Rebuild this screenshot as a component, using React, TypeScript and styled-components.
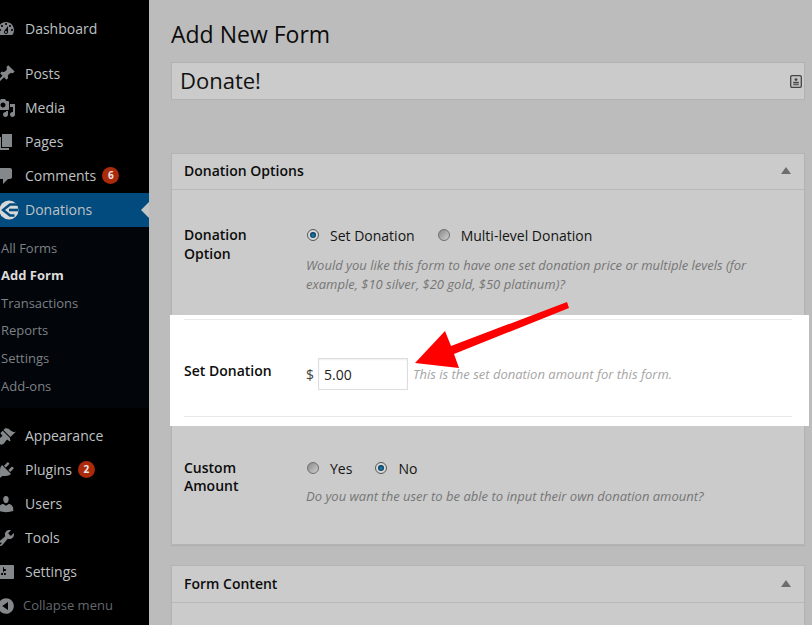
import styled, { createGlobalStyle } from "styled-components";

const GlobalStyle = createGlobalStyle`
  html, body {
    margin: 0;
    padding: 0;
    height: 100%;
    overflow: hidden;
    background: #bcbcbc;
    font-family: "Open Sans", "Noto Sans", sans-serif;
  }
`;

const Page = styled.div`
  position: relative;
  display: flex;
  width: 812px;
  height: 625px;
  overflow: hidden;
  background: #bcbcbc;
`;

const Sidebar = styled.nav`
  flex: 0 0 149px;
  display: flex;
  flex-direction: column;
  background: #000;
  padding-top: 12px;
  box-sizing: border-box;
`;

const MenuGroup = styled.div<{ $gap?: number }>`
  display: flex;
  flex-direction: column;
  margin-top: ${(p) => p.$gap ?? 0}px;
`;

const MenuItem = styled.div<{ $active?: boolean }>`
  position: relative;
  display: flex;
  align-items: center;
  height: 34px;
  box-sizing: border-box;
  padding: 0 0 2px 25px;
  font-size: 14px;
  color: #bfc1c3;
  background: ${(p) => (p.$active ? "#024b7e" : "transparent")};

  ${(p) =>
    p.$active &&
    `&::after {
      content: "";
      position: absolute;
      right: 0;
      top: 50%;
      margin-top: -8px;
      border: 8px solid transparent;
      border-right-color: #c4c4c4;
      border-left-width: 0;
    }`}
`;

const MenuIcon = styled.svg`
  position: absolute;
  left: -4px;
  top: 7px;
  width: 20px;
  height: 20px;
  fill: #85888b;
`;

const LogoIcon = styled.svg`
  position: absolute;
  left: -2px;
  top: 6px;
  width: 22px;
  height: 22px;
`;

const Badge = styled.span`
  display: inline-flex;
  align-items: center;
  justify-content: center;
  width: 17px;
  height: 17px;
  margin-left: 6px;
  border-radius: 50%;
  background: #ab2a0c;
  color: #e8e8e8;
  font-size: 10px;
  font-weight: 700;
`;

const SubMenu = styled.div`
  display: flex;
  flex-direction: column;
  height: 181px;
  padding-top: 7.7px;
  box-sizing: border-box;
  background: #02050a;
`;

const SubItem = styled.div<{ $current?: boolean }>`
  height: 27.6px;
  line-height: 27.6px;
  padding-left: 1px;
  font-size: 13px;
  font-weight: ${(p) => (p.$current ? 700 : 400)};
  color: ${(p) => (p.$current ? "#dcdcdc" : "#7d8186")};
`;

const Collapse = styled(MenuItem)`
  padding-left: 23px;
  font-size: 13px;
  color: #63686d;
`;

const Main = styled.main`
  flex: 1;
  display: flex;
  flex-direction: column;
  padding: 0 7px 0 22px;
  min-width: 0;
`;

const Title = styled.h1`
  flex-shrink: 0;
  margin: 18px 0 11px;
  height: 33px;
  line-height: 33px;
  font-size: 23px;
  font-weight: 400;
  color: #0c0c0c;
`;

const TitleBox = styled.div`
  flex-shrink: 0;
  display: flex;
  align-items: center;
  justify-content: space-between;
  height: 36px;
  padding: 0 2px 0 8px;
  border: 1px solid #b2b2b2;
  background: #cbcbcb;
  font-size: 22px;
  color: #111;
`;

const TitleText = styled.span`
  margin-bottom: 2px;
`;

const ContactIcon = styled.svg`
  width: 12px;
  height: 13px;
`;

const Card = styled.section<{ $top: number }>`
  flex-shrink: 0;
  margin-top: ${(p) => p.$top}px;
  border: 1px solid #b4b4b4;
  background: #cbcbcb;
  box-shadow: 0 1px 1px rgba(0, 0, 0, 0.06);
`;

const CardHeader = styled.header<{ $tall?: boolean }>`
  display: flex;
  align-items: center;
  justify-content: space-between;
  height: ${(p) => (p.$tall ? 34 : 33)}px;
  padding: 0 13px ${(p) => (p.$tall ? 2 : 2)}px 12px;
  border-bottom: 1px solid #b9b9b9;
  font-size: 14px;
  font-weight: 600;
  color: #0c0c0c;
`;

const CardBody = styled.div`
  height: 60px;
`;

const CollapseArrow = styled.span`
  width: 0;
  height: 0;
  border-left: 5px solid transparent;
  border-right: 5px solid transparent;
  border-bottom: 7px solid #6d6d6d;
`;

const Row = styled.div<{ $height: number; $top: number }>`
  display: grid;
  grid-template-columns: 122px 1fr;
  height: ${(p) => p.$height}px;
  padding: ${(p) => p.$top}px 12px 0;
  box-sizing: border-box;
`;

const RowLabel = styled.div<{ $leading?: number; $top?: number }>`
  margin-top: ${(p) => p.$top ?? 0}px;
  font-size: 14px;
  font-weight: 600;
  line-height: ${(p) => p.$leading ?? 19}px;
  color: #0c0c0c;
`;

const RadioLine = styled.div`
  display: flex;
  align-items: center;
  height: 20px;
  font-size: 14px;
  color: #141414;
`;

const RadioOption = styled.label<{ $gap: number }>`
  display: flex;
  align-items: center;
  gap: 11px;
  margin-left: 1px;
  margin-right: ${(p) => p.$gap}px;
`;

const Radio = styled.span<{ $checked?: boolean }>`
  display: flex;
  align-items: center;
  justify-content: center;
  width: 12px;
  height: 12px;
  border-radius: 50%;
  border: 1px solid ${(p) => (p.$checked ? "#555" : "#6f6f6f")};
  box-sizing: border-box;
  background: ${(p) => (p.$checked ? "#d8d8d8" : "linear-gradient(135deg, #8a8a8a, #cfcfcf)")};

  &::after {
    content: "";
    display: ${(p) => (p.$checked ? "block" : "none")};
    width: 6px;
    height: 6px;
    border-radius: 50%;
    background: radial-gradient(circle at 50% 55%, #1c86b8, #08304f 75%);
  }
`;

const Hint = styled.p<{ $top: number }>`
  margin: ${(p) => p.$top}px 0 0;
  font-size: 13px;
  font-style: italic;
  line-height: 19px;
  color: #767676;
`;

const Band = styled.div`
  position: relative;
  margin: 0 -5px 0 -2px;
  padding: 4px 17px 9px 14px;
  background: #fff;
`;

const BandRow = styled.div`
  display: grid;
  grid-template-columns: 122px 1fr;
  align-items: center;
  height: 98px;
  padding-top: 4px;
  box-sizing: border-box;
  border-top: 1px solid #e9e9e9;
  border-bottom: 1px solid #e9e9e9;
`;

const AmountField = styled.div`
  display: flex;
  align-items: center;
  margin-top: 8px;
  font-size: 14px;
  color: #444;
`;

const AmountInput = styled.input`
  width: 90px;
  height: 32px;
  box-sizing: border-box;
  margin: 0 5px 0 4px;
  padding: 0 5px;
  border: 1px solid #ddd;
  box-shadow: inset 0 1px 2px rgba(0, 0, 0, 0.07);
  font-family: inherit;
  font-size: 14px;
  color: #222;
  outline: none;
`;

const InlineHint = styled.span`
  font-size: 13px;
  font-style: italic;
  color: #a5a5a5;
`;

const Arrow = styled.svg`
  position: absolute;
  left: 405px;
  top: 295px;
  width: 175px;
  height: 80px;
  fill: #fe0000;
`;

const icons = {
  dashboard:
    "M3.76 16h12.48c1.1-1.37 1.76-3.11 1.76-5 0-4.42-3.58-8-8-8s-8 3.58-8 8c0 1.89.66 3.63 1.76 5zM10 4c.55 0 1 .45 1 1s-.45 1-1 1-1-.45-1-1 .45-1 1-1zM6 6c.55 0 1 .45 1 1s-.45 1-1 1-1-.45-1-1 .45-1 1-1zm8 0c.55 0 1 .45 1 1s-.45 1-1 1-1-.45-1-1 .45-1 1-1zm-5.37 5.55L12 7v6c0 1.1-.9 2-2 2s-2-.9-2-2c0-.57.24-1.08.63-1.45zM4 10c.55 0 1 .45 1 1s-.45 1-1 1-1-.45-1-1 .45-1 1-1zm12 0c.55 0 1 .45 1 1s-.45 1-1 1-1-.45-1-1 .45-1 1-1zm-5 3c0-.55-.45-1-1-1s-1 .45-1 1 .45 1 1 1 1-.45 1-1z",
  posts:
    "M10.44 3.02l1.82-1.82 6.36 6.35-1.83 1.82c-1.05-.68-2.48-.57-3.41.36l-.75.75c-.92.93-1.04 2.35-.35 3.41l-1.83 1.82-2.41-2.41-2.8 2.79c-.42.42-3.38 2.71-3.8 2.29s1.86-3.39 2.28-3.81l2.79-2.79L4.1 9.36l1.83-1.82c1.05.69 2.48.57 3.4-.36l.75-.75c.93-.92 1.05-2.35.36-3.41z",
  media:
    "M13 11V4c0-.55-.45-1-1-1h-1.67L9 1H5L3.67 3H2c-.55 0-1 .45-1 1v7c0 .55.45 1 1 1h10c.55 0 1-.45 1-1zM7 4.5c1.38 0 2.5 1.12 2.5 2.5S8.38 9.5 7 9.5 4.5 8.38 4.5 7 5.62 4.5 7 4.5zM14 6h5v10.5c0 1.38-1.12 2.5-2.5 2.5S14 17.88 14 16.5s1.12-2.5 2.5-2.5c.17 0 .34.02.5.05V9h-3V6zm-4 8.05V13h2v3.5c0 1.38-1.12 2.5-2.5 2.5S7 17.88 7 16.5 8.12 14 9.5 14c.17 0 .34.02.5.05z",
  pages: "M6 15V2h10v13H6zm-1 1h8v2H3V5h2v11z",
  comments:
    "M5 2h9c1.1 0 2 .9 2 2v7c0 1.1-.9 2-2 2h-2l-5 5v-5H5c-1.1 0-2-.9-2-2V4c0-1.1.9-2 2-2z",
  appearance:
    "M14.48 11.06L7.41 3.99l1.5-1.5c.5-.56 2.3-.47 3.51.32 1.21.8 1.43 1.28 2.91 2.1 1.18.64 2.45 1.26 4.45.85zm-.71.71L6.7 4.7 4.93 6.47c-.39.39-.39 1.02 0 1.41l1.06 1.06c.39.39.39 1.03 0 1.42-.6.6-1.43 1.11-2.21 1.69-.35.26-.7.53-1.01.84C1.43 13.23.4 15.07 2.65 17.32c2.26 2.26 4.09 1.22 5.43-.12.31-.31.58-.66.84-1.01.58-.78 1.09-1.61 1.69-2.21.39-.39 1.02-.39 1.41 0l1.06 1.06c.39.39 1.02.39 1.41 0z",
  plugins:
    "M13.11 4.36L9.87 7.6 8 5.73l3.24-3.24c.35-.34 1.05-.2 1.56.32.52.51.66 1.21.31 1.55zm-8 1.77l.91-1.12 9.01 9.01-1.19.84c-.71.71-2.63 1.16-3.82 1.16H6.14L4.9 17.26c-.59.59-1.54.59-2.12 0-.59-.58-.59-1.53 0-2.12l1.24-1.24v-3.88c0-1.13.4-3.19 1.09-3.89zm7.26 3.97l3.24-3.24c.34-.35 1.04-.21 1.55.31.52.51.66 1.21.31 1.55l-3.24 3.25z",
  users:
    "M10 9.25c-2.27 0-2.73-3.44-2.73-3.44C7 4.02 7.82 2 9.97 2c2.16 0 2.98 2.02 2.71 3.81 0 0-.41 3.44-2.68 3.44zm0 2.57L12.72 10c2.39 0 4.52 2.33 4.52 4.53v2.49s-3.65 1.13-7.24 1.13c-3.65 0-7.24-1.13-7.24-1.13v-2.49c0-2.25 1.94-4.48 4.47-4.48z",
  tools:
    "M16.68 9.77c-1.34 1.34-3.3 1.67-4.95.99l-5.41 6.52c-.99.99-2.59.99-3.58 0s-.99-2.59 0-3.57l6.52-5.42c-.68-1.65-.35-3.61.99-4.95 1.28-1.28 3.12-1.62 4.72-1.06l-2.89 2.89 2.82 2.82 2.86-2.87c.53 1.58.18 3.39-1.08 4.65zM3.81 16.21c.4.39 1.04.39 1.43 0 .4-.4.4-1.04 0-1.43-.39-.4-1.03-.4-1.43 0-.39.39-.39 1.03 0 1.43z",
  settings:
    "M18 16V4c0-.55-.45-1-1-1H3c-.55 0-1 .45-1 1v12c0 .55.45 1 1 1h14c.55 0 1-.45 1-1zM8 11h1c.55 0 1 .45 1 1s-.45 1-1 1H8v1.5c0 .28-.22.5-.5.5s-.5-.22-.5-.5V13H6c-.55 0-1-.45-1-1s.45-1 1-1h1V5.5c0-.28.22-.5.5-.5s.5.22.5.5V7h1c.55 0 1 .45 1 1s-.45 1-1 1h-1v5.5c0 .28-.22.5-.5.5s-.5-.22-.5-.5V9z",
  collapse:
    "M10 2.16c4.33 0 7.84 3.51 7.84 7.84s-3.51 7.84-7.84 7.84S2.16 14.33 2.16 10 5.71 2.16 10 2.16zm2 11.72V6.12L6.18 9.97z",
};

const Icon = ({ name }: { name: keyof typeof icons }) => (
  <MenuIcon viewBox="0 0 20 20">
    <path d={icons[name]} />
  </MenuIcon>
);

const GiveLogo = () => (
  <LogoIcon viewBox="0 0 22 22">
    <circle cx="11" cy="11" r="9.5" fill="#d6d8da" />
    <path d="M20 5.5H12L5 11l7 5.5h4.5" fill="none" stroke="#024b7e" strokeWidth="2.4" />
    <path d="M11 11h9" stroke="#024b7e" strokeWidth="2.6" />
  </LogoIcon>
);

export default function App() {
  return (
    <Page>
      <GlobalStyle />
      <Sidebar>
        <MenuItem>
          <Icon name="dashboard" />
          Dashboard
        </MenuItem>
        <MenuGroup $gap={11}>
          <MenuItem>
            <Icon name="posts" />
            Posts
          </MenuItem>
          <MenuItem>
            <Icon name="media" />
            Media
          </MenuItem>
          <MenuItem>
            <Icon name="pages" />
            Pages
          </MenuItem>
          <MenuItem>
            <Icon name="comments" />
            Comments<Badge>6</Badge>
          </MenuItem>
          <MenuItem $active>
            <GiveLogo />
            Donations
          </MenuItem>
        </MenuGroup>
        <SubMenu>
          <SubItem>All Forms</SubItem>
          <SubItem $current>Add Form</SubItem>
          <SubItem>Transactions</SubItem>
          <SubItem>Reports</SubItem>
          <SubItem>Settings</SubItem>
          <SubItem>Add-ons</SubItem>
        </SubMenu>
        <MenuGroup $gap={11}>
          <MenuItem>
            <Icon name="appearance" />
            Appearance
          </MenuItem>
          <MenuItem>
            <Icon name="plugins" />
            Plugins<Badge>2</Badge>
          </MenuItem>
          <MenuItem>
            <Icon name="users" />
            Users
          </MenuItem>
          <MenuItem>
            <Icon name="tools" />
            Tools
          </MenuItem>
          <MenuItem>
            <Icon name="settings" />
            Settings
          </MenuItem>
          <Collapse>
            <Icon name="collapse" />
            Collapse menu
          </Collapse>
        </MenuGroup>
      </Sidebar>

      <Main>
        <Title>Add New Form</Title>
        <TitleBox>
          <TitleText>Donate!</TitleText>
          <ContactIcon viewBox="0 0 12 13">
            <rect x="0.7" y="0.7" width="10.6" height="11.6" rx="1.2" fill="#c4c4c4" stroke="#444" strokeWidth="1.3" />
            <circle cx="6" cy="4.6" r="1.4" fill="#444" />
            <rect x="3.2" y="6.8" width="5.6" height="1.6" fill="#444" />
            <rect x="3.2" y="9.2" width="5.6" height="1" fill="#444" />
          </ContactIcon>
        </TitleBox>

        <Card $top={53}>
          <CardHeader>
            Donation Options
            <CollapseArrow />
          </CardHeader>
          <Row $height={125} $top={35}>
            <RowLabel>
              Donation
              <br />
              Option
            </RowLabel>
            <div>
              <RadioLine>
                <RadioOption $gap={22}>
                  <Radio $checked />
                  Set Donation
                </RadioOption>
                <RadioOption $gap={0}>
                  <Radio />
                  Multi-level Donation
                </RadioOption>
              </RadioLine>
              <Hint $top={11}>
                Would you like this form to have one set donation price or multiple levels (for
                <br />
                example, $10 silver, $20 gold, $50 platinum)?
              </Hint>
            </div>
          </Row>
          <Band>
            <BandRow>
              <RowLabel>Set Donation</RowLabel>
              <AmountField>
                $
                <AmountInput value="5.00" readOnly />
                <InlineHint>This is the set donation amount for this form.</InlineHint>
              </AmountField>
            </BandRow>
          </Band>
          <Row $height={118} $top={32}>
            <RowLabel $leading={18} $top={1}>
              Custom
              <br />
              Amount
            </RowLabel>
            <div>
              <RadioLine>
                <RadioOption $gap={22}>
                  <Radio />
                  Yes
                </RadioOption>
                <RadioOption $gap={0}>
                  <Radio $checked />
                  No
                </RadioOption>
              </RadioLine>
              <Hint $top={9}>Do you want the user to be able to input their own donation amount?</Hint>
            </div>
          </Row>
        </Card>

        <Card $top={20}>
          <CardHeader $tall>
            Form Content
            <CollapseArrow />
          </CardHeader>
          <CardBody />
        </Card>
      </Main>

      <Arrow viewBox="0 0 175 80">
        <polygon points="162,7 164,13 49,59 54,73 10,68 40,36 46,51" />
      </Arrow>
    </Page>
  );
}
